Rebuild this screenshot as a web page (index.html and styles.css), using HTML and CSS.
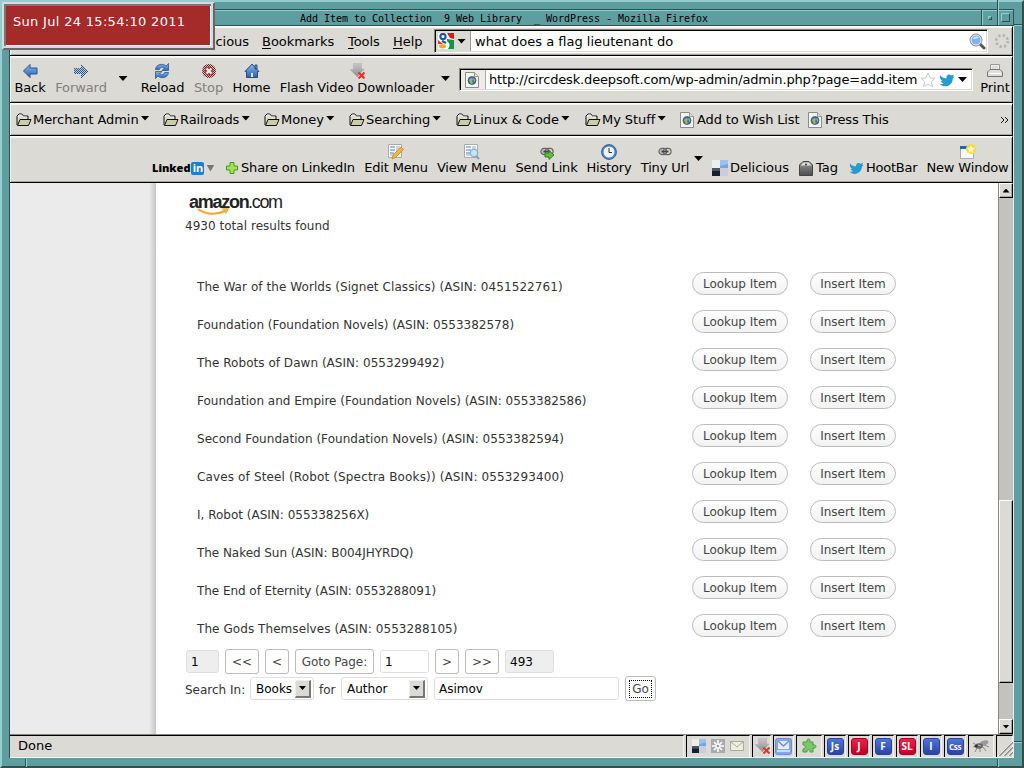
FILE: index.html
```
<!DOCTYPE html>
<html lang="en">
<head>
<meta charset="utf-8">
<title>Add Item to Collection</title>
<link rel="stylesheet" href="styles.css">
</head>
<body>
<svg class="defs" aria-hidden="true">
  <defs>
    <linearGradient id="blue" x1="0" y1="0" x2="0" y2="1"><stop offset="0" stop-color="#8db7ea"/><stop offset="1" stop-color="#2c62ac"/></linearGradient>
    <linearGradient id="gray" x1="0" y1="0" x2="0" y2="1"><stop offset="0" stop-color="#c9c9c9"/><stop offset="1" stop-color="#8c8c8c"/></linearGradient>
    <linearGradient id="dark" x1="0" y1="0" x2="0" y2="1"><stop offset="0" stop-color="#999"/><stop offset="1" stop-color="#4c4c4c"/></linearGradient>
    <pattern id="dots" width="2" height="2" patternUnits="userSpaceOnUse"><rect width="2" height="2" fill="#c3cbd8"/><path d="M0 0h1v1H0zM1 1h1v1H1z" fill="#2f5488"/></pattern>
    <pattern id="reddots" width="2" height="2" patternUnits="userSpaceOnUse"><rect width="2" height="2" fill="#cfc6c2"/><path d="M0 0h1v1H0zM1 1h1v1H1z" fill="#7a1214"/></pattern>
    <symbol id="i-folder" viewBox="0 0 16 14"><path d="M1 12V3l2-2h3l1 2h5v3" fill="#dcdccc" stroke="#111"/><path d="M1.500 12.500 4 6.500h11l-2.500 6z" fill="#c9ceaa" stroke="#111"/><path d="M2 4l1-2h3l1 2h4" fill="none" stroke="#fff" stroke-width=".7"/></symbol>
    <symbol id="i-page" viewBox="0 0 14 16"><path d="M.5.5h9l4 4v11H.5z" fill="#f5f5f3" stroke="#8b8b87"/><path d="M9.500.5v4h4" fill="#ddd" stroke="#999"/><circle cx="7" cy="8.500" r="4" fill="#3d70b8" stroke="#284f87" stroke-width=".7"/><path d="M4 8l2-2 2 1-1 2 1 2-2 1zM8 6l2 1v3l-1-1z" fill="#adb941"/></symbol>
    <symbol id="i-dl" viewBox="0 0 16 16"><path d="M4.500 0h8v6H15l-6.500 8L1 6.500h3.500z" fill="url(#gray)" stroke="#aaa" stroke-width=".5"/><path d="M9.500 9.500l6 6M15.500 9.500l-6 6" stroke="#ed2e2b" stroke-width="2"/></symbol>
    <symbol id="i-bird" viewBox="0 0 16 14"><path d="M1 2c2 3 5 3 6.500 3.500C7 2 10 .5 12.500 2.500L15 1.500l-1 2 1.500.5-1.700 1.500C14 10 10 13.500 6 13.300c-2.500 0-4-1-5.500-2.500 2 .5 3 .3 4-.6C3 10 2 9 1.800 8H3.500C1.500 7 .5 5 1 2z" fill="#259bd1"/></symbol>
    <symbol id="i-delicious" viewBox="0 0 16 16"><path d="M0 0h16v16H0z" fill="#ccd"/><path d="M0 0h8v8H0z" fill="#eee"/><path d="M8 0h8v8H8z" fill="#72a6e6"/><path d="M0 8h8v8H0z" fill="#171e2d"/><path d="M0 8h8v3H0z" fill="#4b5568"/><path d="M8 0h8v4L8 6z" fill="#fff" opacity=".3"/></symbol>
    <symbol id="i-chain" viewBox="0 0 16 10"><g fill="none" stroke="#666" stroke-width="1.300"><rect x="1" y="1.500" width="9" height="7" rx="3.500" fill="#bbb"/><rect x="6" y="1.500" width="9" height="7" rx="3.500"/><path d="M4 5h8" stroke="#444" stroke-width="2"/></g></symbol>
    <symbol id="i-list" viewBox="0 0 16 16"><path d="M.5.500h13v13H.5z" fill="#fbfbfb" stroke="#aaa"/><path d="M2 3h5M2 6h5M2 9h4" stroke="#4c7ac5"/><path d="M8 3h4M8 5h4M8 7h4M8 9h4M2 11h6" stroke="#aaa"/></symbol>
  </defs>
</svg>
<div class="desktop">
  <div class="titlebar"><span class="title">Add Item to Collection  9 Web Library  _ WordPress - Mozilla Firefox</span><span class="winbtn"><i class="dot"></i></span><span class="winbtn"><i class="box"></i></span></div>

  <div class="window">
    <div class="bar menubar">
      <span class="menu first">Delicious</span><span class="menu"><u>B</u>ookmarks</span><span class="menu"><u>T</u>ools</span><span class="menu"><u>H</u>elp</span>
      <div class="field search">
        <span class="engine"><svg width="16" height="16" viewBox="0 0 16 16"><path d="M0 0h16v16H0z" fill="#fff"/><path d="M9 0h7v6l-4-1z" fill="#e11"/><path d="M9 6l7 1v9h-6c3-4 1-6-1-8z" fill="#189344"/><path d="M0 7l5 4H0z" fill="#e33"/><circle cx="5" cy="3.500" r="2.600" fill="#fff" stroke="#1557b8" stroke-width="2.200"/><ellipse cx="4.500" cy="13.300" rx="3.500" ry="2.200" fill="#f5ad1e"/><path d="M4 8l4 2" stroke="#1557b8" stroke-width="2.500"/></svg><i class="tri"></i></span>
        <span class="value">what does a flag lieutenant do</span>
        <svg width="17" height="17" viewBox="0 0 17 17"><path d="M11 11l4 4" stroke="#555" stroke-width="3" stroke-linecap="round"/><circle cx="7" cy="7" r="6" fill="#7fb1ee" stroke="#888"/><circle cx="7" cy="7" r="5" fill="none" stroke="#e9eef5"/><path d="M4 6c1-3 4-3 6-1-2 0-3 1-6 1" fill="#d7e9ff"/></svg>
      </div>
      <svg class="throbber" width="16" height="16" viewBox="0 0 16 16"><circle cx="8" cy="8" r="5.800" fill="none" stroke="#b4b3af" stroke-width="2.600" stroke-dasharray="2.300 2.255"/></svg>
    </div>

    <div class="bar navbar">
      <div class="tool"><svg width="16" height="16" viewBox="0 0 16 16"><path d="M8 1.500V5h7v6H8v3.500L1.500 8z" fill="url(#blue)" stroke="#2b538e"/></svg>Back</div>
      <div class="tool off"><svg width="16" height="16" viewBox="0 0 16 16" shape-rendering="crispEdges"><path d="M8 1v4H1v6h7v4l7-7z" fill="url(#dots)"/></svg>Forward</div>
      <i class="tri"></i>
      <div class="tool"><svg width="16" height="16" viewBox="0 0 16 16"><path d="M1.500 6.500C2 1 9 0 12 3L14.500.5v7H8L10.500 5C8 3.500 6 4.500 5.500 6.500z" fill="url(#blue)" stroke="#295895" stroke-width=".8"/><path d="M14.500 9.500C14 15 7 16 4 13L1.500 15.500v-7H8L5.500 11c2.500 1.500 4.500.5 5-1.500z" fill="url(#blue)" stroke="#295895" stroke-width=".8"/></svg>Reload</div>
      <div class="tool off"><svg width="16" height="16" viewBox="0 0 16 16"><circle cx="8" cy="8" r="7" fill="url(#reddots)"/><circle cx="8" cy="8" r="4.500" fill="#a44"/><path d="M5.500 5.500l5 5M10.500 5.500l-5 5" stroke="#eee" stroke-width="2.200"/></svg>Stop</div>
      <div class="tool"><svg width="16" height="16" viewBox="0 0 16 16"><path d="M11 2h2v4h-2zM8 1l7 7.500h-1.500v6h-11v-6H1z" fill="url(#blue)" stroke="#254f8c"/><path d="M7 10h2v4H7z" fill="#dfeaf8"/></svg>Home</div>
      <div class="tool"><svg width="16" height="16"><use href="#i-dl"/></svg>Flash Video Downloader</div>
      <i class="tri"></i>
      <div class="field url">
        <span class="site"><svg width="14" height="16"><use href="#i-page"/></svg></span>
        <span class="value">http://circdesk.deepsoft.com/wp-admin/admin.php?page=add-item</span>
        <svg width="16" height="16" viewBox="0 0 16 16"><path d="M8 1l2.100 4.800 5 .5-3.800 3.400 1.200 5L8 12.100l-4.500 2.600 1.200-5L.9 6.300l5-.5z" fill="#fff" stroke="#c6c6c6"/></svg>
        <svg width="16" height="14"><use href="#i-bird"/></svg>
        <i class="tri"></i>
      </div>
      <div class="tool"><svg width="16" height="16" viewBox="0 0 16 16"><path d="M3.500 8V1.500h9V8" fill="#eee" stroke="#999"/><path d="M5 4h6M5 6h6" stroke="#ccc"/><path d="M.5 9l2.500-2.500h10L15.500 9v4.500H.5z" fill="#ddd" stroke="#777"/><path d="M2 10.500h12" stroke="#fff"/></svg>Print</div>
    </div>

    <div class="bar bookmarks">
      <span class="mark"><svg width="16" height="14"><use href="#i-folder"/></svg>Merchant Admin<i class="tri"></i></span>
      <span class="mark"><svg width="16" height="14"><use href="#i-folder"/></svg>Railroads<i class="tri"></i></span>
      <span class="mark"><svg width="16" height="14"><use href="#i-folder"/></svg>Money<i class="tri"></i></span>
      <span class="mark"><svg width="16" height="14"><use href="#i-folder"/></svg>Searching<i class="tri"></i></span>
      <span class="mark"><svg width="16" height="14"><use href="#i-folder"/></svg>Linux &amp; Code<i class="tri"></i></span>
      <span class="mark"><svg width="16" height="14"><use href="#i-folder"/></svg>My Stuff<i class="tri"></i></span>
      <span class="mark link"><svg width="14" height="16"><use href="#i-page"/></svg>Add to Wish List</span>
      <span class="mark link"><svg width="14" height="16"><use href="#i-page"/></svg>Press This</span>
      <svg width="9" height="8" viewBox="0 0 9 8"><path d="M1 1l3 3-3 3M5 1l3 3-3 3" fill="none" stroke="#111"/></svg>
    </div>

    <div class="bar extras">
      <div class="side linkedin"><b>Linked</b><span class="in">in</span><i class="tri"></i></div>
      <div class="side share"><svg width="14" height="14" viewBox="0 0 14 14"><path d="M5 1.500h4V5h3.500v4H9v3.500H5V9H1.500V5H5z" fill="#a6df51" stroke="#479924" stroke-linejoin="round"/></svg>Share on LinkedIn</div>
      <div class="tool"><svg width="16" height="16" viewBox="0 0 16 16"><use href="#i-list"/><path d="M4 15l1-4 8-8 2.500 2.500-8 8z" fill="#f0b73e" stroke="#c28625" stroke-width=".8"/></svg>Edit Menu</div>
      <div class="tool"><svg width="16" height="16" viewBox="0 0 16 16"><use href="#i-list"/><path d="M12 12l3 3" stroke="#999" stroke-width="2"/><circle cx="10" cy="9" r="3.800" fill="#c6e3fa" stroke="#76a5d7"/></svg>View Menu</div>
      <div class="tool"><svg width="16" height="16" viewBox="0 0 16 16"><use href="#i-chain" x="1" y="3" width="14" height="9"/><path d="M6 9h4V6.500l5 4.500-5 4.500V13H6z" fill="#62bd37" stroke="#308022"/></svg>Send Link</div>
      <div class="tool"><svg width="16" height="16" viewBox="0 0 16 16"><circle cx="8" cy="8" r="6.500" fill="#eef4fc" stroke="#4a80c5" stroke-width="2"/><circle cx="8" cy="8" r="7.500" fill="none" stroke="#254d86" stroke-width=".7"/><path d="M8 4v4.500h3" fill="none" stroke="#333"/></svg>History</div>
      <div class="tool"><svg width="16" height="16" viewBox="0 0 16 16"><use href="#i-chain" x="1" y="3" width="14" height="9"/></svg>Tiny Url</div>
      <i class="tri"></i>
      <div class="side"><svg width="16" height="16"><use href="#i-delicious"/></svg>Delicious</div>
      <div class="side"><svg width="14" height="16" viewBox="0 0 14 16"><path d="M.5 5L4 1.500h6L13.500 5v10.500H.5z" fill="url(#dark)" stroke="#444"/><path d="M1.500 5.500L4.500 2.500h5l3 3z" fill="#ddd"/><circle cx="7" cy="4.500" r="1" fill="#333"/></svg><span class="tagtext">Tag</span></div>
      <div class="side hoot"><svg width="15" height="14"><use href="#i-bird"/></svg>HootBar</div>
      <div class="tool"><svg width="16" height="16" viewBox="0 0 16 16"><path d="M.5 2.500h13v12H.5z" fill="#f8f8f8" stroke="#aaa"/><path d="M0 2h9v3H0z" fill="#365f9f"/><circle cx="11" cy="5" r="5" fill="#f4dc35"/><path d="M11 1l1.200 2.800 3 .2-2.300 2 .8 3L11 7.400 8.300 9l.8-3-2.300-2 3-.2z" fill="#fff8b8"/></svg>New Window</div>
    </div>

    <div class="viewport">
      <div class="adminside"></div>
      <main class="page">
        <div class="logo"><span class="amz">amazon</span><span class="com">.com</span><svg class="smile" width="34" height="7" viewBox="0 0 34 7"><path d="M1 1c8 6 19 6 28 1.500" fill="none" stroke="#f3a62b" stroke-width="2"/><path d="M25 1h6L28.500 5.500" fill="none" stroke="#f3a62b" stroke-width="1.500"/></svg></div>
        <p class="total">4930 total results found</p>
        <div class="results">
          <div class="item wide"><span>The War of the Worlds (Signet Classics) (ASIN: 0451522761)</span><a class="pill">Lookup Item</a><a class="pill">Insert Item</a></div>
          <div class="item"><span>Foundation (Foundation Novels) (ASIN: 0553382578)</span><a class="pill">Lookup Item</a><a class="pill">Insert Item</a></div>
          <div class="item semi"><span>The Robots of Dawn (ASIN: 0553299492)</span><a class="pill">Lookup Item</a><a class="pill">Insert Item</a></div>
          <div class="item"><span>Foundation and Empire (Foundation Novels) (ASIN: 0553382586)</span><a class="pill">Lookup Item</a><a class="pill">Insert Item</a></div>
          <div class="item semi"><span>Second Foundation (Foundation Novels) (ASIN: 0553382594)</span><a class="pill">Lookup Item</a><a class="pill">Insert Item</a></div>
          <div class="item wider"><span>Caves of Steel (Robot (Spectra Books)) (ASIN: 0553293400)</span><a class="pill">Lookup Item</a><a class="pill">Insert Item</a></div>
          <div class="item"><span>I, Robot (ASIN: 055338256X)</span><a class="pill">Lookup Item</a><a class="pill">Insert Item</a></div>
          <div class="item tight"><span>The Naked Sun (ASIN: B004JHYRDQ)</span><a class="pill">Lookup Item</a><a class="pill">Insert Item</a></div>
          <div class="item tight"><span>The End of Eternity (ASIN: 0553288091)</span><a class="pill">Lookup Item</a><a class="pill">Insert Item</a></div>
          <div class="item wide"><span>The Gods Themselves (ASIN: 0553288105)</span><a class="pill">Lookup Item</a><a class="pill">Insert Item</a></div>
        </div>
        <div class="pager"><span class="input ro">1</span><a class="btn">&lt;&lt;</a><a class="btn">&lt;</a><a class="btn">Goto Page:</a><span class="input">1</span><a class="btn">&gt;</a><a class="btn">&gt;&gt;</a><span class="input ro">493</span></div>
        <div class="finder"><span class="label">Search In:</span><span class="input select">Books<b class="drop"><i class="tri"></i></b></span><span class="label for">for</span><span class="input select">Author<b class="drop"><i class="tri"></i></b></span><span class="input">Asimov</span><a class="btn go"><em>Go</em></a></div>
      </main>
      <div class="scroll"><b class="arrow"><i class="tri up"></i></b><b class="thumb"></b><b class="arrow"><i class="tri"></i></b></div>
    </div>

    <div class="status">
      <span class="cell done">Done</span>
      <span class="cell trio"><svg width="14" height="14" viewBox="0 0 16 16"><use href="#i-delicious"/></svg><svg width="14" height="14" viewBox="1 1 14 14"><path d="M1 1h14v14H1z" fill="#aaa"/><path d="M8 2v12M2 8h12M4 4l8 8M12 4l-8 8" stroke="#fff" stroke-width="1.600"/><circle cx="8" cy="8" r="1.300" fill="#999"/></svg><svg width="14" height="14" viewBox="1 1 14 14"><path d="M1.500 3.500h13v9h-13z" fill="#eeeede" stroke="#aaa99a"/><path d="M2 4l6 5 6-5" fill="none" stroke="#aaa99a"/></svg></span>
      <span class="cell"><svg width="16" height="16"><use href="#i-dl"/></svg></span>
      <span class="cell"><svg width="17" height="17" viewBox="0 0 17 17"><rect x=".5" y=".5" width="16" height="16" rx="2" fill="#87a6e5" stroke="#6f8cc9"/><path d="M3 3h11v8H3z" fill="#e4edff"/><path d="M3 3l5.500 5L14 3" fill="none" stroke="#6c8bcf" stroke-width="1.300"/><path d="M2 13h13" stroke="#cbdcff" stroke-width="2"/></svg></span>
      <span class="cell"><svg width="16" height="16" viewBox="0 0 16 16"><path d="M2 4h4c-1-4 4-4 3 0h3v3c4-1 4 4 0 3v4H9c1-3-4-3-3 0H2v-3c3 0 3-4 0-4z" fill="#79c767" stroke="#48a143"/></svg></span>
      <span class="cell"><b class="badge">Js</b></span><span class="cell"><b class="badge red">J</b></span><span class="cell"><b class="badge">F</b></span><span class="cell"><b class="badge red">SL</b></span><span class="cell"><b class="badge">I</b></span><span class="cell"><b class="badge css">Css</b></span>
      <span class="cell"><svg width="18" height="14" viewBox="0 0 18 14"><path d="M3 5L1 4M5 9l-2 4M8 9v4M11 8l3 4M12 6l5 2M4 7L1 8" stroke="#888"/><ellipse cx="12" cy="4" rx="4.500" ry="2.300" fill="#999" transform="rotate(-20 12 4)"/><ellipse cx="7" cy="7" rx="4" ry="2.800" fill="#666"/><circle cx="4" cy="7" r="1.500" fill="#333"/><path d="M6 6l3 1" stroke="#bbb"/></svg></span>
      <span class="cell grip"><svg width="16" height="16" viewBox="0 0 16 16"><path d="M1 16L16 1M6 16L16 6M11 16l5-5" stroke="#fff"/><path d="M2.300 16L16 2.300M7.300 16L16 7.300M12.300 16l3.700-3.700" stroke="#8c8981" stroke-width="1.300"/></svg></span>
    </div>
  </div>
  <i class="notch tr"></i><i class="notch br"></i><i class="notch bl"></i><i class="notch flat rt"></i><i class="notch flat rb"></i>
  <div class="clock">Sun Jul 24 15:54:10 2011</div>
</div>
</body>
</html>
```

FILE: styles.css
```
* { box-sizing: border-box; }
body { margin: 0; width: 1024px; height: 768px; overflow: hidden; font: 13px/16px "DejaVu Sans", sans-serif; color: #000; }
.defs { position: absolute; width: 0; height: 0; }
svg { display: block; flex: none; }
.desktop { position: relative; width: 1024px; height: 768px; background: #5f9ea0; border: 2px solid #95cccf; border-right-color: #3b4b4d; border-bottom-color: #3b4b4d; padding: 7px 8px 8px 7px; }

.titlebar { display: flex; height: 17px; border: 1px solid #2f4f50; box-shadow: inset 0 1px #95cccf; }
.title { flex: 1; padding-left: 290px; font: 10px/17px "DejaVu Sans Mono", monospace; letter-spacing: -.02px; white-space: pre; }
.winbtn { display: flex; align-items: center; justify-content: center; width: 16px; border-left: 1px solid #2f4f50; box-shadow: inset 1px 1px #95cccf; }
.dot { width: 4px; height: 4px; border: 1px solid #95cccf; border-right-color: #2f4f50; border-bottom-color: #2f4f50; }
.box { width: 9px; height: 9px; border: 1px solid #95cccf; border-right-color: #2f4f50; border-bottom-color: #2f4f50; }

.window { display: flex; flex-direction: column; height: 732px; border-left: 1px solid #2f4f50; border-right: 1px solid #dff0f0; }
.bar { background: #dbdad5; border-top: 1px solid #fff; border-bottom: 1px solid #000; border-right: 1px solid #000; box-shadow: inset 1px 1px #f5f4f2, inset -1px -1px #aaa69f; white-space: nowrap; }
.tri { flex: none; width: 9px; height: 5px; background: #000; clip-path: polygon(0 0, 100% 0, 50% 100%); }
.tri.up { clip-path: polygon(0 100%, 100% 100%, 50% 0); }

.menubar { display: grid; grid-template-columns: 240px 86px 45px 41px 554px auto; align-items: center; height: 30px; }
.menu { margin: 2px 0 0 12px; letter-spacing: -.05px; }
.first { margin-left: 0; padding-right: 1px; text-align: right; }
.menu u { text-decoration-thickness: 1px; text-underline-offset: 2px; }
.field { display: flex; align-items: center; background: #fff; border: 1px solid #8a8680; border-right-color: #fff; border-bottom-color: #fff; box-shadow: inset 1px 1px #000, inset -1px -1px #dbdad5; }
.search { height: 24px; margin-left: 12px; width: 554px; padding-right: 1px; }
.engine { display: flex; align-items: center; gap: 3px; width: 35px; height: 20px; margin-left: 1px; padding-left: 2px; background: #dbdad5; border-right: 1px solid #999; }
.value { flex: 1; padding-left: 4px; overflow: hidden; white-space: nowrap; }
.search .value { padding-top: 2px; }
.throbber { margin-left: 18px; }

.navbar { display: grid; grid-template-columns: 40px 62px 22px 57px 35px 51px 160px 17px 524px 34px; align-items: center; justify-items: center; height: 47px; }
.tool { display: flex; flex-direction: column; align-items: center; white-space: nowrap; padding-top: 1px; letter-spacing: -.1px; }
.navbar .tool svg { margin-top: -1px; margin-bottom: 1px; }
.off { color: #82817d; }
.navbar > .tri { margin-bottom: 2px; }
.url { width: 514px; height: 23px; gap: 3px; padding-right: 5px; }
.url .value { letter-spacing: -.15px; margin-right: -2px; padding-left: 4px; }
.site { display: flex; align-items: center; justify-content: center; width: 25px; height: 19px; margin: 0 -4px 0 1px; background: #ecebe9; border-right: 1px solid #aaa; }
.site svg { margin-left: -2px; }

.bookmarks { display: grid; grid-template-columns: 147px 101px 85px 107px 129px 95px 128px 192px auto; align-items: center; height: 33px; padding-left: 6px; }
.mark { display: flex; align-items: center; gap: 1px; letter-spacing: -.07px; }
.mark .tri { margin: 0 0 3px 1px; }
.link { gap: 3px; letter-spacing: -.13px; }

.extras { display: grid; grid-template-columns: 73px 134px 73px 78px 72px 53px 59px 18px 87px 50px 73px 90px; justify-items: center; align-items: center; height: 47px; padding-left: 142px; }
.extras .tool { letter-spacing: -.16px; padding-left: 1px; }
.side { display: flex; align-items: center; justify-self: start; align-self: end; height: 16px; margin-bottom: 6px; gap: 2px; }
.share { letter-spacing: -.15px; }
.hoot { letter-spacing: -.25px; }
.tagtext { padding-left: 1px; }
.extras > .tri { justify-self: start; margin-bottom: 2px; }
.linkedin { font: bold 11px/16px "Noto Sans", "Open Sans", sans-serif; gap: 1px; }
.in { width: 13px; height: 13px; border-radius: 2px; background: #1d7fcb; color: #fff; font-size: 11px; line-height: 12px; text-align: center; }
.linkedin .tri { width: 8px; height: 7px; background: #777; margin-left: 1px; }

.viewport { display: flex; flex: 1; min-height: 0; background: #fff; }
.adminside { width: 146px; background: linear-gradient(to right, #ebebeb 139px, #c6c6c6 146px); }
.page { flex: 1; padding: 9px 0 0 29px; font-size: 12px; color: #333; }
.logo { display: flex; position: relative; height: 25px; padding-left: 4px; align-items: flex-start; color: #222; font: 18px/20px "Liberation Sans", sans-serif; }
.amz { font-weight: bold; width: 59px; letter-spacing: -1.25px; white-space: nowrap; }
.com { letter-spacing: -1.3px; }
.smile { position: absolute; left: 12px; top: 16px; }
.total { margin: 0 0 29px; line-height: 18px; letter-spacing: .03px; }
.results { display: flex; flex-direction: column; }
.item { display: grid; grid-template-columns: 495px 118px 86px; height: 38px; padding: 8px 0 0 12px; }
.item span { padding-top: 7px; white-space: nowrap; }
.wide span { letter-spacing: .07px; }
.wider span { letter-spacing: .14px; }
.semi span { letter-spacing: .035px; }
.tight span { letter-spacing: -.05px; }
.pill { display: flex; align-items: center; justify-content: center; height: 23px; border: 1px solid #bbb; border-radius: 12px; background: linear-gradient(#fff, #f2f2f2); color: #464646; }
.pill:nth-child(2) { width: 96px; }
.pager { display: grid; grid-template-columns: 33px 34px 24px 79px 49px 24px 34px 49px; gap: 6px; align-items: center; height: 25px; margin: 5px 0 0 1px; }
.btn { display: flex; align-items: center; justify-content: center; height: 25px; border: 1px solid #bbb; border-radius: 3px; background: #fff; color: #464646; }
.input { display: flex; align-items: center; height: 23px; border: 1px solid #dfdfdf; border-radius: 3px; background: #fff; color: #000; padding-left: 4px; }
.ro { background: #eee; }
.finder { display: grid; grid-template-columns: 59px 64px 15px 87px 185px 31px; gap: 6px; align-items: center; height: 25px; margin-top: 2px; white-space: nowrap; }
.label { padding-top: 2px; }
.for { margin-left: -1px; }
.select { padding: 0 2px 0 5px; justify-content: space-between; }
.drop { display: flex; align-items: center; justify-content: center; width: 16px; height: 18px; background: #dbdad5; border: 1px solid #eee; border-right: 2px solid #777; border-bottom: 2px solid #777; }
.drop .tri { width: 7px; height: 4px; }
.go em { font-style: normal; outline: 1px dotted #000; padding: 0 2px; }

.scroll { display: flex; flex-direction: column; width: 15px; background: #c4c2bd; border-left: 1px solid #8a8680; }
.arrow, .thumb { display: flex; align-items: center; justify-content: center; background: #dbdad5; border: 1px solid #fff; border-right-color: #000; border-bottom-color: #000; box-shadow: inset -1px -1px #aaa69f; }
.arrow { height: 15px; }
.arrow .tri { width: 7px; height: 4px; }
.thumb { height: 183px; margin: 302px 0 36px; }

.status { display: grid; grid-template-columns: 676px 66px 21px 23px 28px 24px 24px 24px 24px 24px 24px 28px 17px; height: 24px; background: #dbdad5; border-top: 1px solid #8a8680; border-bottom: 1px solid #eef5f5; }
.cell { display: flex; align-items: center; justify-content: center; margin-right: 2px; padding-bottom: 1px; border-top: 1px solid #000; border-left: 1px solid #000; border-right: 1px solid #f3f2ef; }
.done { justify-content: flex-start; padding-left: 8px; border-left: 0; }
.trio { gap: 5px; }
.badge { flex: none; width: 17px; height: 17px; border-radius: 3px; background: linear-gradient(#4d74df, #2942a1); border: 1px solid #304398; color: #fff; font: bold 10px/15px "Open Sans", sans-serif; text-align: center; }
.red { background: linear-gradient(#f61f49, #bd0026); border-color: #a60025; }
.css { font-size: 8px; letter-spacing: -.3px; }
.grip { align-items: flex-end; margin-right: 0; }

/* window-frame corner marks and the clock lie over the frame */
.notch { position: absolute; background: #95cccf; border: 0 solid #2f4f50; }
.tr, .br { left: 995px; width: 2px; border-left-width: 1px; }
.tr { top: -2px; height: 10px; }
.br { top: 757px; height: 8px; }
.bl { left: 23px; top: 757px; width: 2px; height: 8px; border-left-width: 1px; }
.flat { left: 1012px; width: 8px; height: 2px; border-top-width: 1px; }
.rt { top: 22px; }
.rb { top: 739px; }
.clock { position: absolute; left: 0; top: 0; width: 213px; height: 48px; padding: 10px 9px; background: #a52a2a; color: #fff; letter-spacing: .31px; white-space: nowrap; border: 2px solid #d9d9d9; border-right-color: #666; border-bottom-color: #666; box-shadow: inset -2px -2px #d9d9d9, inset 2px 2px #777, inset -3px -3px #fff; }
```
